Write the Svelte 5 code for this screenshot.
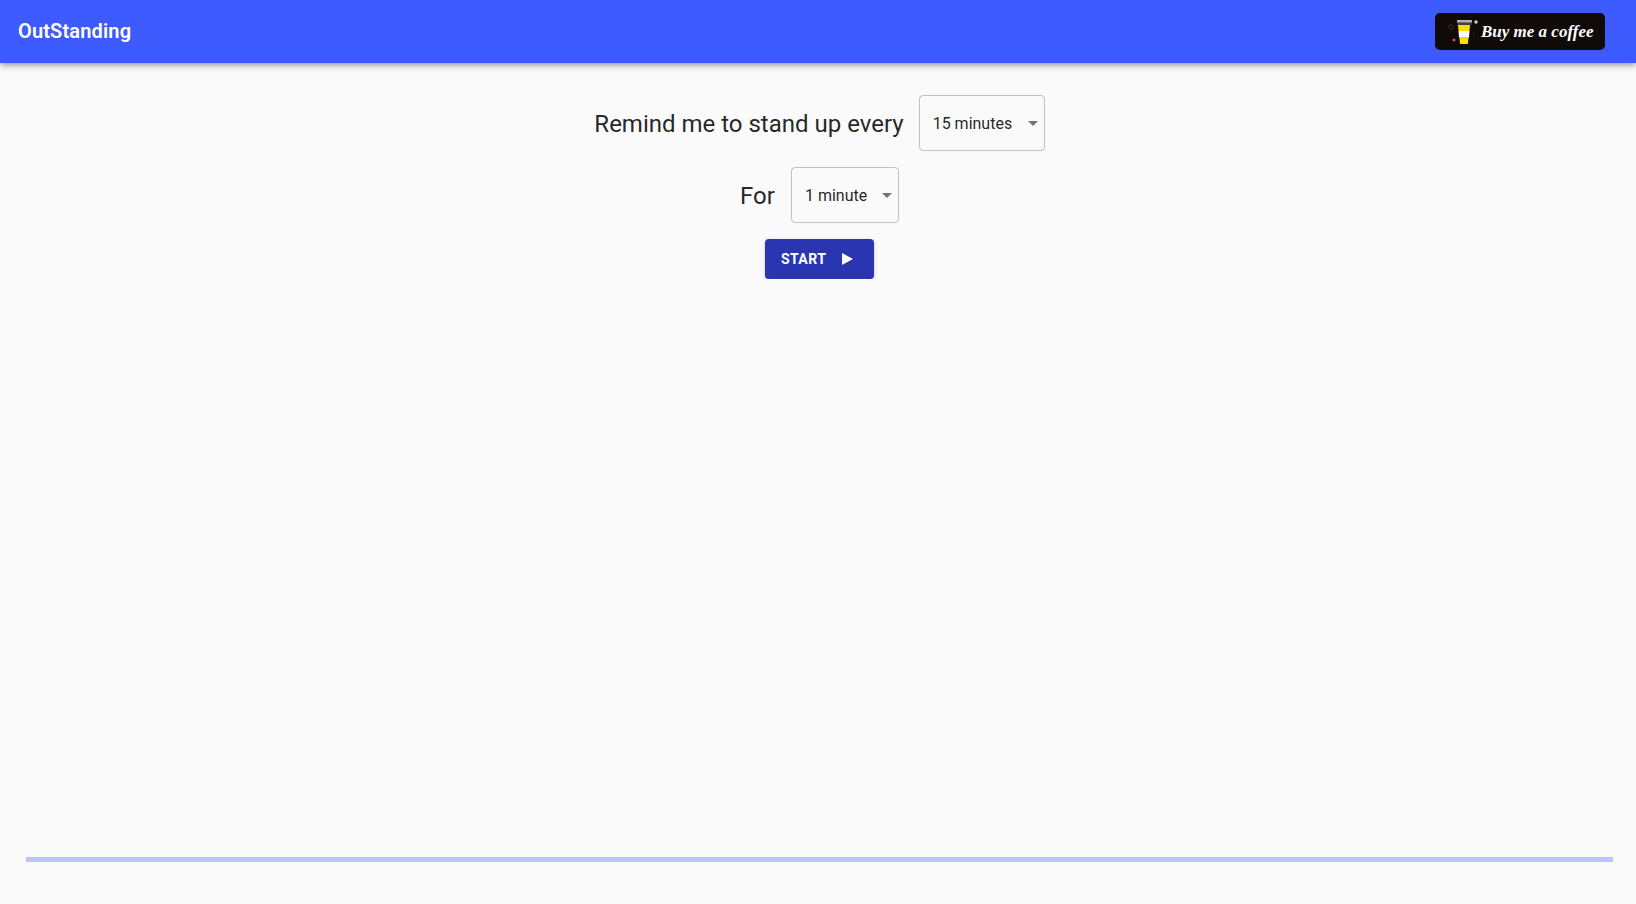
<script lang="ts">
  let intervals = ["15 minutes"];
  let durations = ["1 minute"];
  let interval = $state(intervals[0]);
  let duration = $state(durations[0]);
</script>

<header class="appBar">
  <h1 class="appBar__title">OutStanding</h1>
  <a class="coffee" href="#coffee">
    <svg class="coffee__cup" width="30" height="30" viewBox="0 0 30 30" aria-hidden="true">
      <circle cx="4" cy="10" r="2.200" fill="none" stroke="#2b2826" stroke-width="1.200" />
      <circle cx="7" cy="23" r="1.300" fill="#e8692c" />
      <circle cx="27" cy="17" r="0.800" fill="#3a3633" />
      <path d="M28.500 3h1v1.500H31v1h-1.500V7h-1V5.500H27v-1h1.500z" fill="#fff" />
      <rect x="10" y="3" width="15" height="2.700" fill="#b5b2ae" />
      <rect x="10.500" y="5.700" width="14" height="2.300" fill="#45413e" />
      <path d="M11 8h12l-.5 6h-11z" fill="#ffdd00" />
      <path d="M11.500 14h11l-.5 6.700H12z" fill="#fff" />
      <path d="M12.500 20.700h9l-.6 6.300h-7.800z" fill="#ffdd00" />
    </svg>
    <span class="coffee__text">Buy me a coffee</span>
  </a>
</header>

<main class="form">
  <div class="form__row form__row--tight">
    <span class="form__label">Remind me to stand up every</span>
    <div class="select" role="button" tabindex="0">
      <span>{interval}</span>
      <svg class="select__icon" viewBox="0 0 24 24" aria-hidden="true"><path d="M7 10l5 5 5-5z" /></svg>
    </div>
  </div>
  <div class="form__row">
    <span class="form__label">For</span>
    <div class="select select--short" role="button" tabindex="0">
      <span>{duration}</span>
      <svg class="select__icon" viewBox="0 0 24 24" aria-hidden="true"><path d="M7 10l5 5 5-5z" /></svg>
    </div>
  </div>
  <button class="start">
    Start
    <svg class="start__icon" viewBox="0 0 24 24" aria-hidden="true"><path d="M8 6v12l11-6z" /></svg>
  </button>
</main>

<div class="progress"></div>

<style>
  :global(body) {
    background: #fafafa;
    font-family: Roboto, "Liberation Sans", sans-serif;
    color: rgba(0, 0, 0, 0.87);
  }

  .appBar {
    height: 63px;
    box-sizing: border-box;
    padding: 0 31px 0 18px;
    display: flex;
    align-items: center;
    justify-content: space-between;
    background: #3d5afe;
    color: #fff;
    box-shadow:
      0 2px 4px -1px rgba(0, 0, 0, 0.2),
      0 4px 5px 0 rgba(0, 0, 0, 0.14),
      0 1px 10px 0 rgba(0, 0, 0, 0.12);
  }

  .appBar__title {
    margin: 0 0 2px;
    font-size: 20px;
    font-weight: 600;
    line-height: 1.6;
    letter-spacing: 0.0075em;
  }

  .coffee {
    width: 170px;
    height: 37px;
    display: flex;
    align-items: center;
    gap: 4px;
    box-sizing: border-box;
    padding-left: 12px;
    border-radius: 5px;
    background: #100a09;
    color: #fff;
    text-decoration: none;
  }

  .coffee__cup {
    flex-shrink: 0;
    overflow: visible;
  }

  .coffee__text {
    font-family: "Liberation Serif", serif;
    font-style: italic;
    font-weight: 700;
    font-size: 17px;
    white-space: nowrap;
  }

  .form {
    padding: 32px 0 0 3px;
    display: flex;
    flex-direction: column;
    align-items: center;
    gap: 16px;
  }

  .form__row {
    display: flex;
    align-items: center;
    gap: 16px;
  }

  .form__row--tight {
    gap: 15px;
  }

  .form__label {
    padding-top: 2px;
    font-size: 24px;
    line-height: 1.334;
  }

  .select {
    position: relative;
    box-sizing: border-box;
    width: 126px;
    height: 56px;
    padding: 0 0 0 13px;
    display: flex;
    align-items: center;
    font-size: 16px;
    white-space: nowrap;
    border: 1px solid rgba(0, 0, 0, 0.23);
    border-radius: 4px;
    cursor: pointer;
  }

  .select--short {
    width: 108px;
  }

  .select__icon {
    position: absolute;
    top: 15px;
    right: -1px;
    width: 24px;
    height: 24px;
    fill: rgba(0, 0, 0, 0.54);
  }

  .start {
    width: 109px;
    height: 40px;
    box-sizing: border-box;
    padding: 0 0 0 16px;
    display: flex;
    align-items: center;
    border: 0;
    border-radius: 4px;
    background: #2a36b1;
    color: #fff;
    font-family: inherit;
    font-size: 14px;
    font-weight: 700;
    letter-spacing: 0.02857em;
    text-transform: uppercase;
    cursor: pointer;
    box-shadow:
      0 3px 1px -2px rgba(0, 0, 0, 0.2),
      0 2px 2px 0 rgba(0, 0, 0, 0.14),
      0 1px 5px 0 rgba(0, 0, 0, 0.12);
  }

  .start__icon {
    width: 24px;
    height: 24px;
    margin-left: 8px;
    fill: currentColor;
  }

  .progress {
    height: 5px;
    margin: 0 23px 0 26px;
    position: fixed;
    left: 0;
    right: 0;
    bottom: 42px;
    background: #bbc4ff;
  }
</style>
